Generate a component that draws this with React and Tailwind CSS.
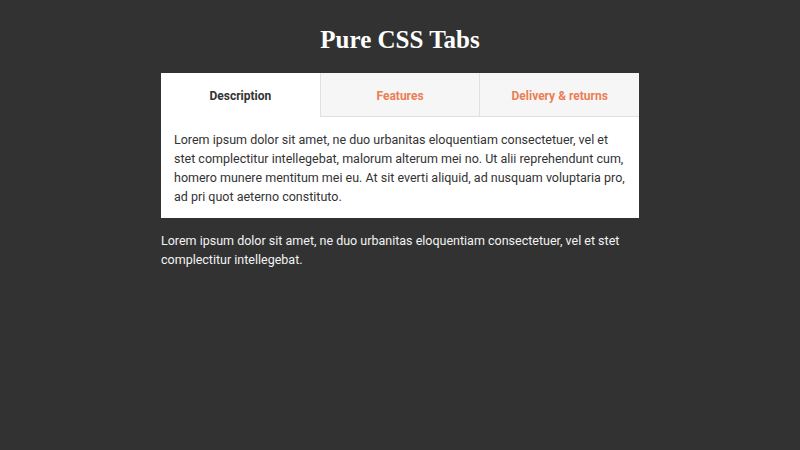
import React from 'react';

const tabs = ['Description', 'Features', 'Delivery & returns'];

export default function App() {
  return (
    <div className="min-h-[450px] w-full bg-[#323232] font-['Roboto',sans-serif] pt-[24px]">
      <h1 className="text-center font-['Liberation_Serif',serif] font-bold text-[25px] leading-[32px] text-white">
        Pure CSS Tabs
      </h1>
      <div className="mx-auto mt-[17px] w-[478px]">
        <div className="bg-white">
          <div className="flex h-[44px]">
            {tabs.map((t, i) => (
              <div
                key={t}
                className={`flex-1 flex items-center justify-center pt-[2px] text-[12px] font-bold ${
                  i === 0
                    ? 'bg-white text-[#333]'
                    : 'bg-[#f6f6f6] text-[#ea7e54] border-l border-b border-[#e0e0e0]'
                }`}
              >
                {t}
              </div>
            ))}
          </div>
          <div className="px-[13px] pt-[13px] pb-[12px] text-[12.5px] leading-[19px] text-[#333]">
            Lorem ipsum dolor sit amet, ne duo urbanitas eloquentiam consectetuer, vel et stet complectitur intellegebat, malorum alterum mei no. Ut alii reprehendunt cum, homero munere mentitum mei eu. At sit everti aliquid, ad nusquam voluptaria pro, ad pri quot aeterno constituto.
          </div>
        </div>
        <p className="mt-[13px] text-[12.5px] leading-[19px] text-[#f2f2f2]">
          Lorem ipsum dolor sit amet, ne duo urbanitas eloquentiam consectetuer, vel et stet complectitur intellegebat.
        </p>
      </div>
    </div>
  );
}
